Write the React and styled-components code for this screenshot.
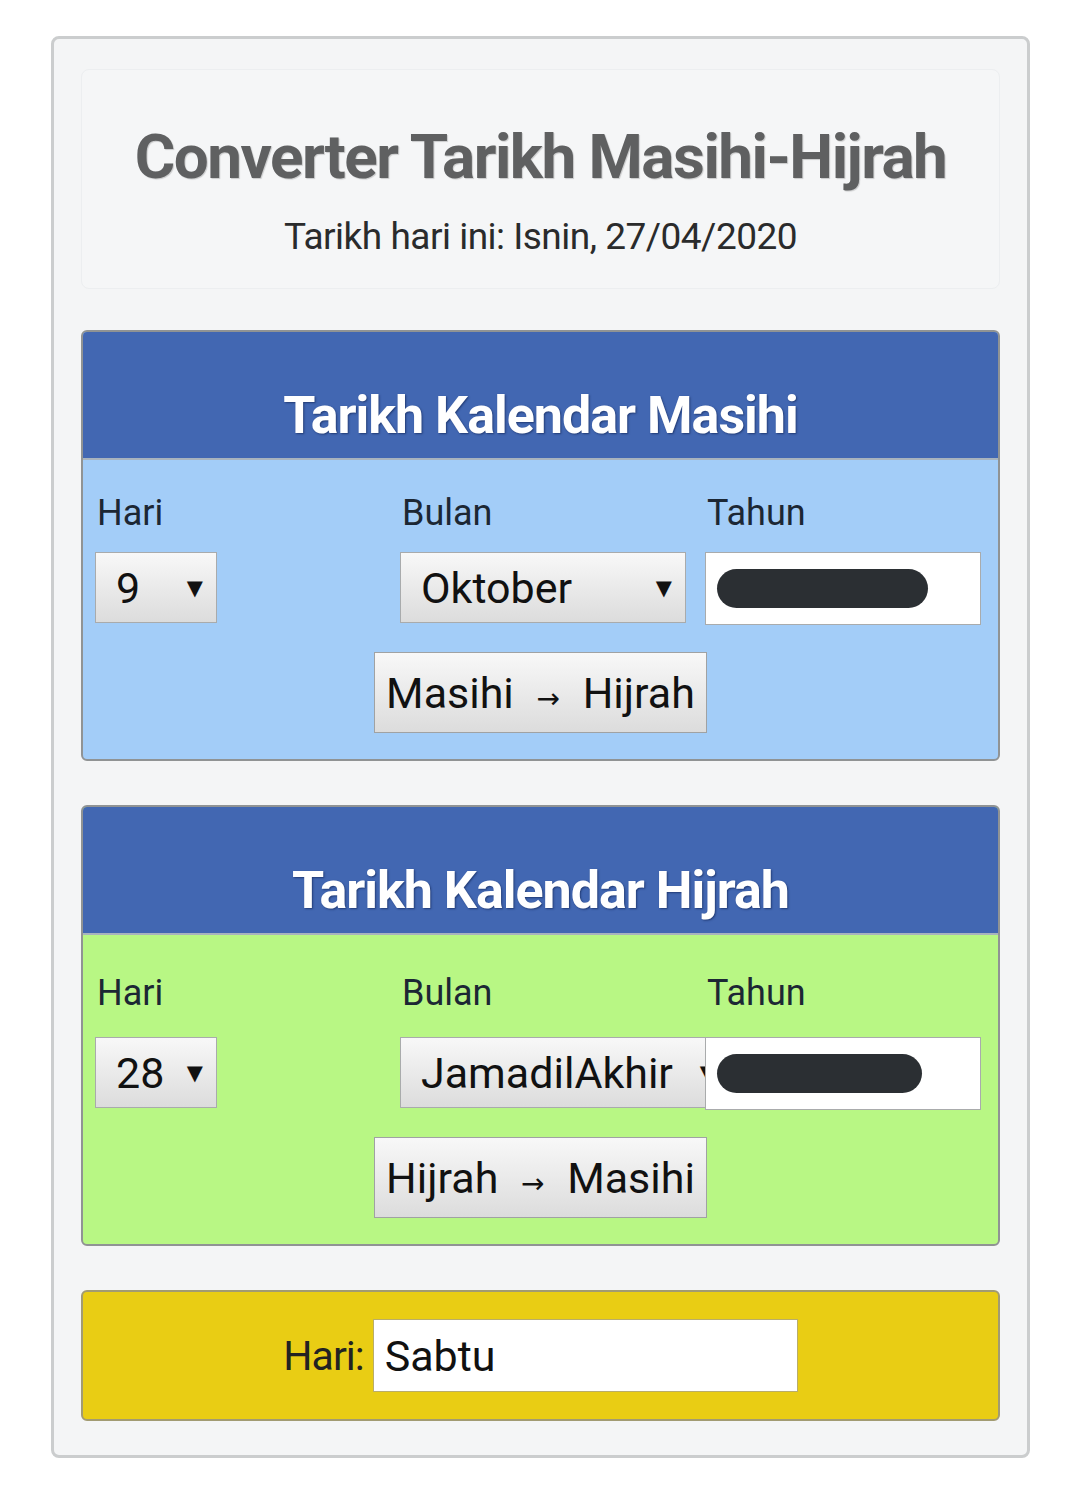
import React from "react";
import styled, { createGlobalStyle } from "styled-components";

const Global = createGlobalStyle`
  html, body { margin: 0; padding: 0; background: #ffffff; }
  body { font-family: Roboto, "Noto Sans", "Liberation Sans", sans-serif; }
  * { box-sizing: border-box; }
`;

const Card = styled.div`
  width: 979px;
  margin: 36px 0 0 51px;
  border: 3px solid #cbcdce;
  border-radius: 8px;
  background: #f4f5f6;
  padding: 30px 27px 34px;
  display: flex;
  flex-direction: column;
`;

const Intro = styled.div`
  border: 1px solid #eceef0;
  border-radius: 8px;
  background: #f5f6f7;
  padding: 52px 0 28px;
  display: flex;
  flex-direction: column;
  align-items: center;
  margin-bottom: 41px;
`;

const Title = styled.h1`
  margin: 0;
  font-family: Roboto, "Liberation Sans", sans-serif;
  font-weight: 700;
  font-size: 62px;
  line-height: 70px;
  letter-spacing: -1.5px;
  color: #5f6061;
  text-shadow: 1px 1px 1px rgba(0, 0, 0, 0.18);
`;

const Today = styled.p`
  margin: 22px 0 0;
  font-size: 37px;
  line-height: 46px;
  letter-spacing: -0.5px;
  color: #2a2b2c;
`;

const Panel = styled.section`
  border: 2px solid #909394;
  border-radius: 6px;
  overflow: hidden;
  background: ${(p) => p.$bg};
  margin-bottom: 44px;
`;

const PanelHead = styled.h2`
  margin: 0;
  background: #4267b2;
  border-bottom: 2px solid #a8b3be;
  padding: 54px 0 12px;
  text-align: center;
  font-weight: 700;
  font-size: 52px;
  line-height: 60px;
  letter-spacing: -1px;
  color: #ffffff;
  text-shadow: 1px 1px 2px rgba(20, 40, 90, 0.7);
`;

const PanelBody = styled.div`
  padding: ${(p) => p.$top}px 0 26px;
  display: flex;
  flex-direction: column;
  align-items: center;
`;

const FieldGrid = styled.div`
  align-self: stretch;
  display: grid;
  grid-template-columns: 305px 305px 1fr;
  row-gap: ${(p) => p.$gap}px;
  padding: 0 17px 0 12px;
  margin-bottom: 27px;
`;

const Label = styled.div`
  font-size: 36px;
  line-height: 44px;
  color: #1c2734;
  padding-left: 2px;
`;

const Select = styled.div`
  width: ${(p) => p.$w}px;
  height: 71px;
  display: flex;
  align-items: center;
  justify-content: space-between;
  padding: 0 13px 0 20px;
  background: linear-gradient(#f8f8f8, #dcdcdc);
  border: 1px solid #a9abac;
  font-size: 43px;
  color: #111;
  white-space: nowrap;
`;

const Caret = styled.span`
  font-family: "DejaVu Sans", sans-serif;
  font-size: 21px;
  color: #111;
`;

const YearBox = styled.div`
  width: 100%;
  height: 73px;
  display: flex;
  align-items: center;
  padding-left: 11px;
  background: #ffffff;
  border: 1px solid #a9abac;
`;

const Redact = styled.span`
  display: block;
  width: ${(p) => p.$w}px;
  height: 39px;
  border-radius: 20px;
  background: #2b2f33;
`;

const Convert = styled.button`
  height: 81px;
  padding: 0 11px;
  background: linear-gradient(#f8f8f8, #dcdcdc);
  border: 1px solid #a0a2a3;
  border-radius: 0;
  font-family: Roboto, "Liberation Sans", sans-serif;
  font-size: 43px;
  color: #111;
  white-space: nowrap;
`;

const Arrow = styled.span`
  font-family: "DejaVu Sans", sans-serif;
  font-size: 28px;
  margin: 0 12px;
`;

const Result = styled.div`
  border: 2px solid #a29b72;
  border-radius: 6px;
  background: #e9cd14;
  padding: 27px 0;
  display: flex;
  justify-content: center;
  align-items: center;
  gap: 9px;
`;

const ResultLabel = styled.span`
  font-size: 41px;
  letter-spacing: -1px;
  color: #222;
`;

const ResultBox = styled.div`
  width: 425px;
  height: 73px;
  display: flex;
  align-items: center;
  padding-left: 11px;
  background: #fff;
  border: 1px solid #b9ad6a;
  font-size: 43px;
  color: #111;
`;

function Converter({ title, bg, top, gap, day, month, monthW, redactW, from, to }) {
  return (
    <Panel $bg={bg}>
      <PanelHead>{title}</PanelHead>
      <PanelBody $top={top}>
        <FieldGrid $gap={gap}>
          <Label>Hari</Label>
          <Label>Bulan</Label>
          <Label>Tahun</Label>
          <Select $w={122}>
            <span>{day}</span>
            <Caret>▼</Caret>
          </Select>
          <Select $w={monthW}>
            <span>{month}</span>
            <Caret>▼</Caret>
          </Select>
          <YearBox>
            <Redact $w={redactW} />
          </YearBox>
        </FieldGrid>
        <Convert type="button">
          {from} <Arrow>→</Arrow> {to}
        </Convert>
      </PanelBody>
    </Panel>
  );
}

export default function App() {
  return (
    <>
      <Global />
      <Card>
        <Intro>
          <Title>Converter Tarikh Masihi-Hijrah</Title>
          <Today>Tarikh hari ini: Isnin, 27/04/2020</Today>
        </Intro>
        <Converter
          title="Tarikh Kalendar Masihi"
          bg="#a3cdf8"
          top={31}
          gap={17}
          day="9"
          month="Oktober"
          monthW={286}
          redactW={211}
          from="Masihi"
          to="Hijrah"
        />
        <Converter
          title="Tarikh Kalendar Hijrah"
          bg="#b8f784"
          top={36}
          gap={22}
          day="28"
          month="JamadilAkhir"
          monthW={330}
          redactW={205}
          from="Hijrah"
          to="Masihi"
        />
        <Result>
          <ResultLabel>Hari:</ResultLabel>
          <ResultBox>Sabtu</ResultBox>
        </Result>
      </Card>
    </>
  );
}
